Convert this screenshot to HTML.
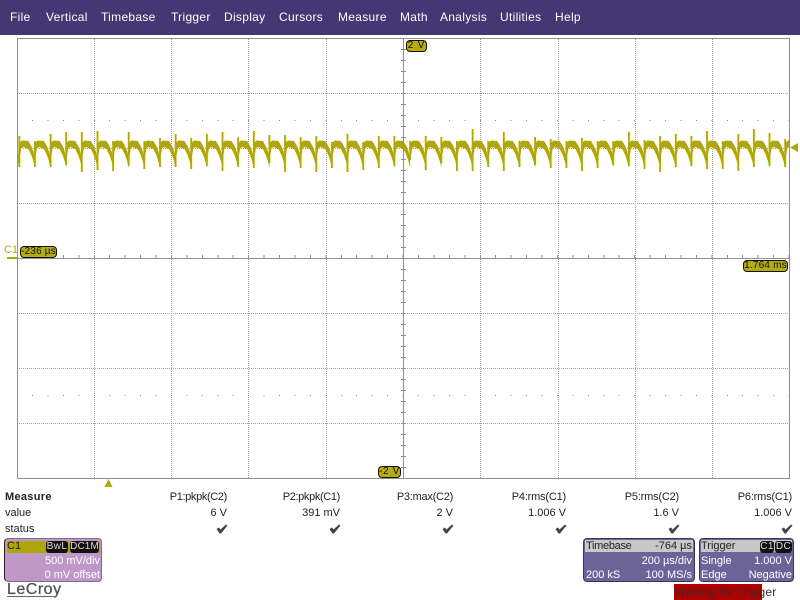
<!DOCTYPE html>
<html><head><meta charset="utf-8"><title>LeCroy</title>
<style>
html,body{margin:0;padding:0;background:#fff;width:800px;height:600px;overflow:hidden}
body{position:relative;font-family:"Liberation Sans",sans-serif;font-size:11px;color:#222}
.t{position:absolute;white-space:nowrap;line-height:14px}
.r{text-align:right}
.m{position:absolute;top:0;left:0;width:800px;height:35px;background:#433873}
.m span{position:absolute;top:10px;color:#fff;font-size:12px;line-height:15px;letter-spacing:.3px;white-space:nowrap}
.p{position:absolute;border-radius:4px;box-sizing:border-box}
.pill{position:absolute;background:#b5ad10;border:1px solid #111;border-radius:4px;box-sizing:border-box;color:#111;font-size:10px;line-height:10px;text-align:center;white-space:nowrap;letter-spacing:.2px}
.bk{position:absolute;background:#111;color:#ddd;border-radius:3px;text-align:center;font-size:10px;line-height:12px;height:12px;letter-spacing:.4px}
</style></head><body>
<div class="m"><span style="left:10px">File</span><span style="left:46px">Vertical</span><span style="left:101px">Timebase</span><span style="left:171px">Trigger</span><span style="left:224px">Display</span><span style="left:279px">Cursors</span><span style="left:338px">Measure</span><span style="left:400px">Math</span><span style="left:440px">Analysis</span><span style="left:500px">Utilities</span><span style="left:555px">Help</span></div>

<svg width="800" height="600" style="position:absolute;left:0;top:0" xmlns="http://www.w3.org/2000/svg">
<defs>
<path id="a" d="M0,147 L1,142 L3,140.5 L9,141 L12,146 L14,151 L15.7,158 L15.7,168 L14,161 L12,155 L9,149 L4,147 L2,148.5 L1,155 Z"/>
<clipPath id="c"><rect x="18" y="38" width="771" height="440"/></clipPath>
<path id="k" d="M-10.5 529L-8 527.5L-6.5 529.5L-1 524.5L0.5 525.5L-6 533.5L-7.5 533.5Z"/>
</defs>
<g shape-rendering="crispEdges">
<g stroke="#a0a0a0" stroke-width="1" stroke-dasharray="1 1" fill="none">
<path d="M94.5 39V478M171.5 39V478M248.5 39V478M326.5 39V478M480.5 39V478M558.5 39V478M635.5 39V478M712.5 39V478"/>
<path d="M19 93.5H789M19 148.5H789M19 203.5H789M19 313.5H789M19 368.5H789M19 423.5H789"/>
</g>
<g fill="#909090">
<path stroke="#909090" stroke-width="1" stroke-dasharray="1 14.44" fill="none" d="M32 120.5H789M32 395.5H789"/>
<rect x="17" y="38" width="773" height="1"/>
<rect x="17" y="478" width="773" height="1"/>
<rect x="17" y="38" width="1" height="441"/>
<rect x="789" y="38" width="1" height="441"/>
<rect x="403" y="38" width="1" height="440"/>
<rect x="18" y="258" width="771" height="1"/>
</g>
<path stroke="#909090" stroke-width="1" stroke-dasharray="1 10" fill="none" d="M401.5 49V478M402.5 49V478M404.5 49V478M405.5 49V478"/>
<path stroke="#909090" stroke-width="1" stroke-dasharray="1 14.44" fill="none" d="M32 255.5H789M32 256.5H789M32 257.5H789"/>
</g>
<g clip-path="url(#c)">
<path fill="none" stroke="#ffffc8" stroke-width="2" transform="translate(1.8,0)" d="M19.3 136V167M34.9 141V167M50.6 134V167M66.2 132V165M81.8 132V172M97.5 131V170M113.1 141V171M128.7 132V166M144.3 141V169M160 138V167M175.6 134V167M191.2 138V169M206.9 134V166M222.5 132V171M238.1 137V167M253.8 131V168M269.4 135V163M285 135V172M300.6 137V168M316.3 136V172M331.9 142V168M347.5 134V172M363.2 142V170M378.8 136V168M394.4 136V166M410.1 141V160M425.7 136V170M441.3 137V163M456.9 141V171M472.6 129V171M488.2 141V167M503.8 132V171M519.5 141V167M535.1 137V165M550.7 139V168M566.4 141V168M582 138V171M597.6 141V168M613.2 141V165M628.9 132V166M644.5 140V169M660.1 136V172M675.8 134V167M691.4 136V166M707 131V169M722.7 141V169M738.3 134V171M753.9 129V167M769.5 133V166M785.2 139V167"/>
<g fill="#aea60a">
<use href="#a" x="3.7"/><use href="#a" x="19.3"/><use href="#a" x="34.9"/><use href="#a" x="50.6"/><use href="#a" x="66.2"/><use href="#a" x="81.8"/><use href="#a" x="97.5"/><use href="#a" x="113.1"/><use href="#a" x="128.7"/><use href="#a" x="144.3"/><use href="#a" x="160"/><use href="#a" x="175.6"/><use href="#a" x="191.2"/><use href="#a" x="206.9"/><use href="#a" x="222.5"/><use href="#a" x="238.1"/><use href="#a" x="253.8"/><use href="#a" x="269.4"/><use href="#a" x="285"/><use href="#a" x="300.6"/><use href="#a" x="316.3"/><use href="#a" x="331.9"/><use href="#a" x="347.5"/><use href="#a" x="363.2"/><use href="#a" x="378.8"/><use href="#a" x="394.4"/><use href="#a" x="410.1"/><use href="#a" x="425.7"/><use href="#a" x="441.3"/><use href="#a" x="456.9"/><use href="#a" x="472.6"/><use href="#a" x="488.2"/><use href="#a" x="503.8"/><use href="#a" x="519.5"/><use href="#a" x="535.1"/><use href="#a" x="550.7"/><use href="#a" x="566.4"/><use href="#a" x="582"/><use href="#a" x="597.6"/><use href="#a" x="613.2"/><use href="#a" x="628.9"/><use href="#a" x="644.5"/><use href="#a" x="660.1"/><use href="#a" x="675.8"/><use href="#a" x="691.4"/><use href="#a" x="707"/><use href="#a" x="722.7"/><use href="#a" x="738.3"/><use href="#a" x="753.9"/><use href="#a" x="769.5"/><use href="#a" x="785.2"/>
</g>
<path fill="none" stroke="#aea60a" stroke-width="1.8" d="M19.3 136V167M34.9 141V167M50.6 134V167M66.2 132V165M81.8 132V172M97.5 131V170M113.1 141V171M128.7 132V166M144.3 141V169M160 138V167M175.6 134V167M191.2 138V169M206.9 134V166M222.5 132V171M238.1 137V167M253.8 131V168M269.4 135V163M285 135V172M300.6 137V168M316.3 136V172M331.9 142V168M347.5 134V172M363.2 142V170M378.8 136V168M394.4 136V166M410.1 141V160M425.7 136V170M441.3 137V163M456.9 141V171M472.6 129V171M488.2 141V167M503.8 132V171M519.5 141V167M535.1 137V165M550.7 139V168M566.4 141V168M582 138V171M597.6 141V168M613.2 141V165M628.9 132V166M644.5 140V169M660.1 136V172M675.8 134V167M691.4 136V166M707 131V169M722.7 141V169M738.3 134V171M753.9 129V167M769.5 133V166M785.2 139V167"/>
</g>
<path fill="#aea60a" d="M790 147.5L798 143V152Z"/>
<path fill="#aea60a" d="M104.5 487L108.5 479L112.5 487Z"/>
<rect x="7" y="257" width="10" height="2" fill="#aea60a"/>
<g fill="#444">
<use href="#k" x="227"/><use href="#k" x="340"/><use href="#k" x="453"/><use href="#k" x="566"/><use href="#k" x="679"/><use href="#k" x="792"/>
</g>
</svg>

<div class="pill" style="left:406px;top:40px;width:21px;height:12px;letter-spacing:.8px">2 V</div>
<div class="pill" style="left:378px;top:466px;width:23px;height:12px;letter-spacing:.6px">-2 V</div>
<div class="pill" style="left:20px;top:246px;width:37px;height:12px">-236 µs</div>
<div class="pill" style="left:743px;top:260px;width:45px;height:12px">1.764 ms</div>
<div class="t" style="left:4px;top:243px;color:#b5ad10;font-size:11px">C1</div>

<div class="t" style="left:5px;top:490px;font-weight:bold;letter-spacing:.3px">Measure</div>
<div class="t" style="left:5px;top:506px">value</div>
<div class="t" style="left:5px;top:522px">status</div>
<div class="t r" style="right:573px;top:490px;letter-spacing:-.35px">P1:pkpk(C2)</div>
<div class="t r" style="right:460px;top:490px;letter-spacing:-.35px">P2:pkpk(C1)</div>
<div class="t r" style="right:347px;top:490px;letter-spacing:-.25px">P3:max(C2)</div>
<div class="t r" style="right:234px;top:490px;letter-spacing:-.2px">P4:rms(C1)</div>
<div class="t r" style="right:121px;top:490px;letter-spacing:-.2px">P5:rms(C2)</div>
<div class="t r" style="right:8px;top:490px;letter-spacing:-.2px">P6:rms(C1)</div>
<div class="t r" style="right:573px;top:506px">6 V</div>
<div class="t r" style="right:460px;top:506px">391 mV</div>
<div class="t r" style="right:347px;top:506px">2 V</div>
<div class="t r" style="right:234px;top:506px">1.006 V</div>
<div class="t r" style="right:121px;top:506px">1.6 V</div>
<div class="t r" style="right:8px;top:506px">1.006 V</div>

<div class="p" style="left:4px;top:538px;width:98px;height:44px;background:#c098c8;border:1px solid #7b6aa0;border-left-color:#222"></div>
<div style="position:absolute;left:7px;top:541px;width:93px;height:12px;background:#aea60a"></div>
<div class="t" style="left:7px;top:539px;color:#222">C1</div>
<div class="bk" style="left:46px;top:541px;width:22px">BwL</div>
<div class="bk" style="left:70px;top:541px;width:29px;letter-spacing:.1px">DC1M</div>
<div class="t r" style="right:700px;top:554px;color:#fff">500 mV/div</div>
<div class="t r" style="right:700px;top:568px;color:#fff">0 mV offset</div>

<div class="p" style="left:583px;top:538px;width:112px;height:44px;background:#6c6498;border:1px solid #3a3560"></div>
<div style="position:absolute;left:585px;top:540px;width:108px;height:12px;background:#c8c8c8"></div>
<div class="t" style="left:586px;top:539px;color:#222;letter-spacing:-.3px">Timebase</div>
<div class="t r" style="right:108px;top:539px;color:#222">-764 µs</div>
<div class="t r" style="right:108px;top:554px;color:#fff">200 µs/div</div>
<div class="t" style="left:586px;top:568px;color:#fff">200 kS</div>
<div class="t r" style="right:108px;top:568px;color:#fff">100 MS/s</div>

<div class="p" style="left:699px;top:538px;width:95px;height:44px;background:#6c6498;border:1px solid #3a3560"></div>
<div style="position:absolute;left:701px;top:540px;width:91px;height:12px;background:#c8c8c8"></div>
<div class="t" style="left:701px;top:539px;color:#222">Trigger</div>
<div class="bk" style="left:760px;top:541px;width:14px">C1</div>
<div class="bk" style="left:775px;top:541px;width:17px">DC</div>
<div class="t" style="left:701px;top:554px;color:#fff">Single</div>
<div class="t r" style="right:8px;top:554px;color:#fff">1.000 V</div>
<div class="t" style="left:701px;top:568px;color:#fff">Edge</div>
<div class="t r" style="right:8px;top:568px;color:#fff">Negative</div>

<div class="t" style="left:7px;top:581px;font-size:16px;line-height:18px;color:#555;letter-spacing:.5px;-webkit-text-stroke:.3px #555">LeCroy</div>
<div style="position:absolute;left:7px;top:596px;width:46px;height:1px;background:#666"></div>
<div style="position:absolute;left:674px;top:584px;width:88px;height:16px;background:#b00000"></div>
<div class="t" style="left:675px;top:585px;font-size:12px;color:#3a2a2a;letter-spacing:.2px">Waiting for Trigger</div>
</body></html>
